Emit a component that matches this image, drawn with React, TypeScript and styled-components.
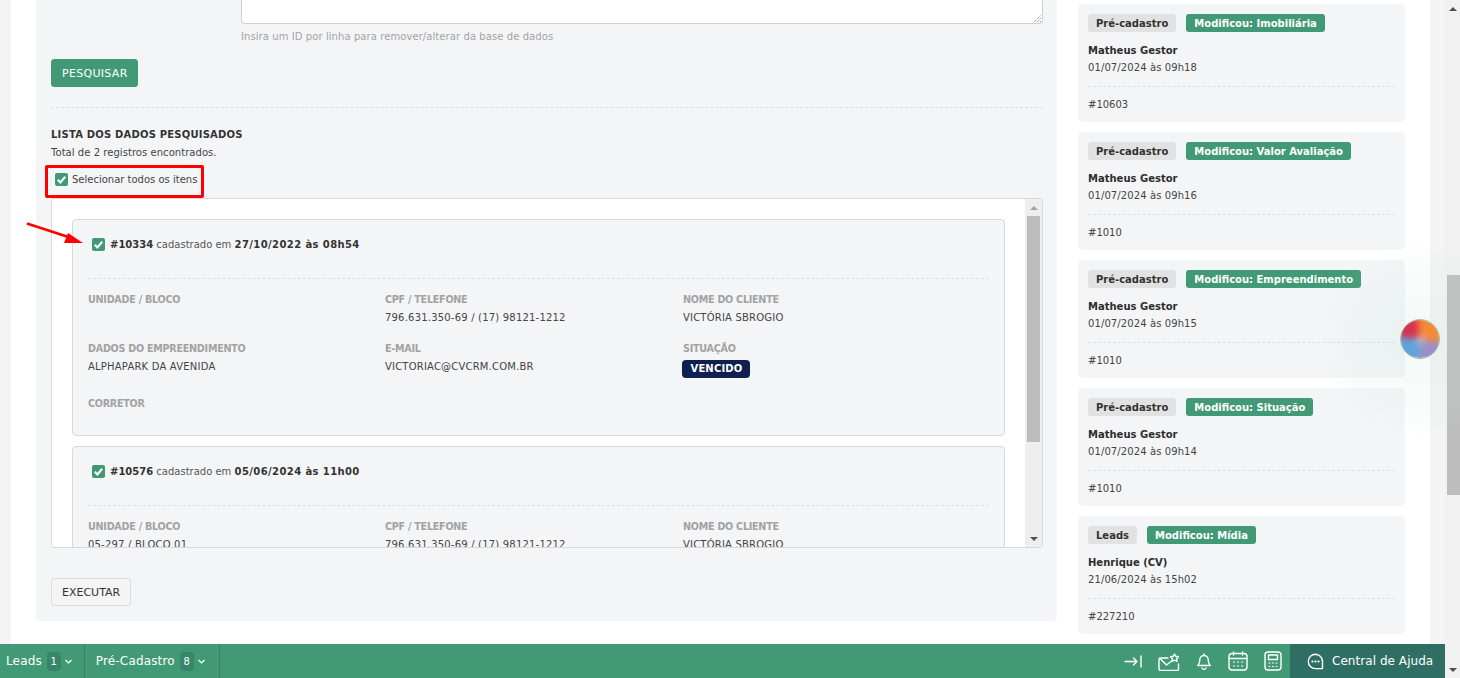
import React from 'react';
import styled, { createGlobalStyle } from 'styled-components';

const green = '#419a75';
const textDark = '#333333';

const GlobalStyle = createGlobalStyle`
  html, body {
    margin: 0;
    padding: 0;
    overflow: hidden;
    background: #f4f4f4;
  }
  body, button, textarea {
    font-family: "DejaVu Sans", Verdana, sans-serif;
  }
  * {
    box-sizing: border-box;
  }
`;

const Page = styled.div`
  position: relative;
  display: flex;
  width: 1460px;
  height: 678px;
  overflow: hidden;
`;

const PageColumn = styled.div`
  display: flex;
  flex-direction: column;
  width: 1445px;
`;

const Workspace = styled.div`
  display: flex;
  align-items: flex-start;
  height: 644px;
  width: 1419px;
  margin-left: 11px;
  padding-left: 25px;
  background: #ffffff;
`;

const MainPanel = styled.main`
  width: 1021px;
  height: 621px;
  padding: 0 14px 0 15px;
  background: #f4f5f7;
  border-radius: 0 0 5px 5px;
`;

const IdField = styled.div`
  margin-left: 190px;
`;

const IdTextarea = styled.div`
  position: relative;
  height: 24px;
  background: #ffffff;
  border: 1px solid #cfcfcf;
  border-top: 0;
  border-radius: 0 0 4px 4px;
`;

const ResizeGrip = styled.svg`
  position: absolute;
  right: 0;
  bottom: 0;
`;

const Hint = styled.div`
  margin-top: 6px;
  font-size: 10px;
  line-height: 13px;
  letter-spacing: 0.08px;
  color: #a3a3a3;
`;

const ActionButton = styled.button<{ $primary?: boolean }>`
  display: block;
  height: 28px;
  padding: 0 ${(p) => (p.$primary ? 9 : 10)}px 0 10px;
  border-radius: 3px;
  border: 1px solid ${(p) => (p.$primary ? green : '#dddddd')};
  background: ${(p) => (p.$primary ? green : '#f4f4f4')};
  color: ${(p) => (p.$primary ? '#ffffff' : textDark)};
  font-size: 11px;
  font-weight: 400;
  letter-spacing: ${(p) => (p.$primary ? '0.3px' : '0')};
`;

const ButtonSlot = styled.div<{ $top: number }>`
  margin-top: ${(p) => p.$top}px;
`;

const Dashed = styled.div<{ $color?: string }>`
  height: 0;
  border-top: 1px dashed ${(p) => p.$color || '#dedfe1'};
`;

const SearchDivider = styled(Dashed)`
  margin-top: 20px;
`;

const ListTitle = styled.h2`
  margin: 20px 0 0;
  font-size: 10px;
  line-height: 13px;
  font-weight: 700;
  letter-spacing: 0.2px;
  color: #333333;
`;

const ListTotal = styled.p`
  margin: 5px 0 0;
  font-size: 10px;
  line-height: 13px;
  letter-spacing: 0.05px;
  color: #444444;
`;

const SelectAll = styled.label`
  display: flex;
  align-items: center;
  gap: 4px;
  height: 13px;
  margin: 14px 0 12px 4px;
  font-size: 10px;
  color: #444444;
`;

const ListBox = styled.div`
  display: flex;
  height: 350px;
  width: 992px;
  background: #ffffff;
  border: 1px solid #d9d9d9;
  border-radius: 3px;
  overflow: hidden;
`;

const ListScroll = styled.div`
  flex: 1;
  display: flex;
  flex-direction: column;
  gap: 10px;
  padding: 20px 20px 0 20px;
  overflow: hidden;
`;

const ListScrollbar = styled.div`
  display: flex;
  flex-direction: column;
  align-items: center;
  width: 17px;
  background: #eeeeee;
  padding: 0 2px;
`;

const Arrow = styled.span<{ $up?: boolean; $dark?: boolean }>`
  width: 0;
  height: 0;
  border-left: 4px solid transparent;
  border-right: 4px solid transparent;
  ${(p) => (p.$up ? 'border-bottom' : 'border-top')}: 4px solid ${(p) => (p.$dark ? '#505050' : '#a3a3a3')};
`;

const ArrowCell = styled.div<{ $height: number }>`
  display: flex;
  align-items: center;
  justify-content: center;
  height: ${(p) => p.$height}px;
  flex-shrink: 0;
`;

const ScrollThumb = styled.div<{ $height: number }>`
  width: 100%;
  height: ${(p) => p.$height}px;
  background: #bdbdbd;
  flex-shrink: 0;
`;

const ScrollRest = styled.div`
  flex: 1;
`;

const RecordCard = styled.article`
  flex-shrink: 0;
  height: 217px;
  padding: 17px 15px 0 15px;
  background: #f4f5f7;
  border: 1px solid #d9d9d9;
  border-radius: 4px;
`;

const RecordHead = styled.div`
  display: flex;
  align-items: center;
  gap: 5px;
  height: 14px;
  margin-left: 4px;
  font-size: 10px;
  color: #555555;
`;

const RecordId = styled.strong`
  font-weight: 700;
  color: #333333;
`;

const RecordDate = styled.strong`
  font-weight: 700;
  letter-spacing: 0.4px;
  color: #333333;
`;

const RecordDivider = styled(Dashed)`
  margin-top: 27px;
`;

const FieldGrid = styled.div`
  display: grid;
  grid-template-columns: 297px 298px 1fr;
  margin-top: 14px;
`;

const Field = styled.div<{ $height: number }>`
  height: ${(p) => p.$height}px;
`;

const FieldLabel = styled.div`
  font-size: 9.6px;
  line-height: 13px;
  font-weight: 700;
  letter-spacing: -0.25px;
  color: #a2a2a2;
`;

const FieldValue = styled.div`
  margin-top: 5px;
  font-size: 10px;
  line-height: 13px;
  letter-spacing: 0.2px;
  color: #444444;
`;

const StatusBadge = styled.span`
  display: block;
  width: fit-content;
  margin: 5px 0 0 -1px;
  padding: 0 8px 0 8.5px;
  height: 18px;
  line-height: 18px;
  border-radius: 4px;
  background: #0f2050;
  color: #ffffff;
  font-size: 10px;
  font-weight: 700;
  letter-spacing: 0.15px;
`;

const SideColumn = styled.aside`
  display: flex;
  flex-direction: column;
  gap: 10px;
  width: 327px;
  margin-left: 21px;
  padding-top: 4px;
`;

const HistoryCard = styled.article`
  height: 118px;
  padding: 10px 10px 0 10px;
  background: #f4f5f7;
  border-radius: 5px;
`;

const BadgeRow = styled.div`
  display: flex;
  gap: 10px;
`;

const Tag = styled.span<{ $green?: boolean }>`
  height: 18px;
  padding: 0 8px;
  line-height: 20px;
  border-radius: 3px;
  font-size: 10px;
  font-weight: 700;
  background: ${(p) => (p.$green ? green : '#e2e2e2')};
  color: ${(p) => (p.$green ? '#ffffff' : '#333333')};
`;

const HistoryName = styled.div`
  margin-top: 12px;
  font-size: 10px;
  line-height: 13px;
  font-weight: 700;
  color: #2e2e2e;
`;

const HistoryDate = styled.div`
  margin-top: 4px;
  font-size: 10px;
  line-height: 13px;
  letter-spacing: 0.1px;
  color: #444444;
`;

const HistoryDivider = styled(Dashed)`
  margin-top: 12px;
`;

const HistoryId = styled.div`
  margin-top: 11px;
  font-size: 10px;
  line-height: 13px;
  color: #444444;
`;

const BottomBar = styled.footer`
  display: flex;
  align-items: stretch;
  height: 34px;
  background: ${green};
  color: #ffffff;
`;

const BarTab = styled.div<{ $first?: boolean }>`
  display: flex;
  align-items: center;
  padding: 0 ${(p) => (p.$first ? 11 : 13)}px 0 ${(p) => (p.$first ? 6 : 11)}px;
  border-right: 1px solid #348160;
  font-size: 12px;
  letter-spacing: 0.15px;
`;

const BarCount = styled.span`
  display: flex;
  align-items: center;
  justify-content: center;
  width: 14px;
  height: 19px;
  margin-left: 5px;
  margin-right: 3px;
  border-radius: 4px;
  background: #368667;
  font-size: 10px;
`;

const BarIcons = styled.div`
  display: flex;
  align-items: center;
  gap: 16px;
  margin-left: auto;
  padding-right: 8px;
`;

const HelpBlock = styled.div`
  display: flex;
  align-items: center;
  gap: 8px;
  width: 155px;
  padding-left: 17px;
  background: #2f6f63;
  font-size: 12px;
  letter-spacing: 0.05px;
`;

const PageScrollbar = styled.div`
  display: flex;
  flex-direction: column;
  align-items: flex-end;
  width: 15px;
  background: #f1f1f1;
`;

const PageArrowCell = styled.div`
  display: flex;
  justify-content: center;
  align-items: center;
  width: 15px;
  height: 17px;
`;

const PageTrack = styled.div`
  flex: 1;
  width: 13px;
  padding-top: 258px;
`;

const PageThumb = styled.div`
  width: 13px;
  height: 220px;
  background: #bdbdbd;
`;

const AnnotationBox = styled.div`
  position: absolute;
  left: 45px;
  top: 165px;
  width: 159px;
  height: 33px;
  border: 3px solid #ff0000;
  border-radius: 2px;
`;

const AnnotationArrow = styled.svg`
  position: absolute;
  left: 24px;
  top: 220px;
`;

const Glow = styled.div`
  position: absolute;
  left: 1320px;
  top: 240px;
  width: 200px;
  height: 200px;
  border-radius: 50%;
  background: radial-gradient(circle, rgba(190, 225, 210, 0.2) 0%, rgba(200, 230, 215, 0.1) 50%, rgba(255, 255, 255, 0) 72%);
  pointer-events: none;
`;

const Orb = styled.div`
  position: absolute;
  left: 1400px;
  top: 319px;
  width: 40px;
  height: 40px;
  border-radius: 50%;
  border: 1px solid #9dc3a8;
  overflow: hidden;

  &::before {
    content: '';
    position: absolute;
    inset: -4px;
    filter: blur(3px);
    background:
      radial-gradient(circle at 50% 52%, rgba(215, 220, 225, 0.7) 0, rgba(215, 220, 225, 0) 22%),
      conic-gradient(#f58a35 0deg 95deg, #9a8fc9 105deg 175deg, #5fa3dc 195deg 265deg, #d8304f 285deg 345deg, #f58a35 360deg);
  }
`;

const CheckBox = styled.svg`
  flex-shrink: 0;
`;

const CheckIcon = () => (
  <CheckBox width="13" height="13" viewBox="0 0 13 13">
    <rect width="13" height="13" rx="2" fill={green} />
    <path d="M2.800 6.800l2.600 2.600 4.800-5.600" fill="none" stroke="#ffffff" strokeWidth="2.100" />
  </CheckBox>
);

const Chevron = () => (
  <svg width="9" height="9" viewBox="0 0 9 9">
    <path d="M1.500 3l3 3 3-3" fill="none" stroke="#ffffff" strokeWidth="1.200" />
  </svg>
);

const iconProps = {
  fill: 'none',
  stroke: '#ffffff',
  strokeWidth: 1.4,
  strokeLinecap: 'round' as const,
  strokeLinejoin: 'round' as const,
};

const ArrowLineIcon = () => (
  <svg width="18" height="20" viewBox="0 0 18 20" {...iconProps}>
    <path d="M1 10.500h12M9.500 7l3.500 3.500-3.500 3.500M17 5v11" />
  </svg>
);

const MailStarIcon = () => (
  <svg width="22" height="20" viewBox="0 0 22 20" {...iconProps}>
    <path d="M10 7H2.500A1.500 1.500 0 0 0 1 8.500V18A1.500 1.500 0 0 0 2.500 19.500H19A1.500 1.500 0 0 0 20.500 18V13" />
    <path d="M2 7.500l6.500 6.500L13 10.500" />
    <path d="M16.500 3l1.300 2.300 2.600.5-1.800 1.900.4 2.600-2.500-1.100-2.500 1.100.4-2.600-1.800-1.900 2.600-.5z" />
  </svg>
);

const BellIcon = () => (
  <svg width="16" height="20" viewBox="0 0 16 20" {...iconProps}>
    <path d="M8 4.500a4.200 4.200 0 0 1 4.200 4.200c0 3 .7 4.300 2 5.800H1.800c1.300-1.500 2-2.800 2-5.800A4.200 4.200 0 0 1 8 4.500z" />
    <path d="M6 17a2.200 2.200 0 0 0 4 0M8 3v1.500" />
  </svg>
);

const CalendarIcon = () => (
  <svg width="20" height="20" viewBox="0 0 20 20" {...iconProps}>
    <rect x="1" y="2.500" width="18" height="16.500" rx="3" />
    <path d="M1 7.500h18M5.500 1v3M14.500 1v3" />
    <path d="M5.500 11h1.200M9.500 11h1.200M13.500 11h1.200M5.500 15h1.200M9.500 15h1.200M13.500 15h1.200" strokeWidth="1.200" />
  </svg>
);

const CalculatorIcon = () => (
  <svg width="18" height="20" viewBox="0 0 18 20" {...iconProps}>
    <rect x="1" y="1" width="16" height="18" rx="3" />
    <rect x="4.500" y="4" width="9" height="4.500" />
    <path d="M5 12h1M8.500 12h1M12 12h1M5 15.500h1M8.500 15.500h1M12 15.500h1" strokeWidth="1.200" />
  </svg>
);

const ChatIcon = () => (
  <svg width="17" height="17" viewBox="0 0 17 17" {...iconProps}>
    <path d="M8.500 1.200a7.200 7.200 0 1 0 0 14.400H15.500V8.500A7.200 7.200 0 0 0 8.500 1.200z" />
    <path d="M5.300 8.500h.4M8.300 8.500h.4M11.300 8.500h.4" strokeWidth="1.800" />
  </svg>
);

type RecordData = {
  id: string;
  createdAt: string;
  unit: string;
};

const records: RecordData[] = [
  { id: '#10334', createdAt: '27/10/2022 às 08h54', unit: '' },
  { id: '#10576', createdAt: '05/06/2024 às 11h00', unit: '05-297 / BLOCO 01' },
];

const history = [
  { kind: 'Pré-cadastro', change: 'Modificou: Imobiliária', name: 'Matheus Gestor', date: '01/07/2024 às 09h18', id: '#10603' },
  { kind: 'Pré-cadastro', change: 'Modificou: Valor Avaliação', name: 'Matheus Gestor', date: '01/07/2024 às 09h16', id: '#1010' },
  { kind: 'Pré-cadastro', change: 'Modificou: Empreendimento', name: 'Matheus Gestor', date: '01/07/2024 às 09h15', id: '#1010' },
  { kind: 'Pré-cadastro', change: 'Modificou: Situação', name: 'Matheus Gestor', date: '01/07/2024 às 09h14', id: '#1010' },
  { kind: 'Leads', change: 'Modificou: Mídia', name: 'Henrique (CV)', date: '21/06/2024 às 15h02', id: '#227210' },
];

const RecordItem = ({ record }: { record: RecordData }) => (
  <RecordCard>
    <RecordHead>
      <CheckIcon />
      <span>
        <RecordId>{record.id}</RecordId> cadastrado em <RecordDate>{record.createdAt}</RecordDate>
      </span>
    </RecordHead>
    <RecordDivider />
    <FieldGrid>
      <Field $height={49}>
        <FieldLabel>UNIDADE / BLOCO</FieldLabel>
        <FieldValue>{record.unit}</FieldValue>
      </Field>
      <Field $height={49}>
        <FieldLabel>CPF / TELEFONE</FieldLabel>
        <FieldValue>796.631.350-69 / (17) 98121-1212</FieldValue>
      </Field>
      <Field $height={49}>
        <FieldLabel>NOME DO CLIENTE</FieldLabel>
        <FieldValue>VICTÓRIA SBROGIO</FieldValue>
      </Field>
      <Field $height={55}>
        <FieldLabel>DADOS DO EMPREENDIMENTO</FieldLabel>
        <FieldValue>ALPHAPARK DA AVENIDA</FieldValue>
      </Field>
      <Field $height={55}>
        <FieldLabel>E-MAIL</FieldLabel>
        <FieldValue>VICTORIAC@CVCRM.COM.BR</FieldValue>
      </Field>
      <Field $height={55}>
        <FieldLabel>SITUAÇÃO</FieldLabel>
        <StatusBadge>VENCIDO</StatusBadge>
      </Field>
      <Field $height={30}>
        <FieldLabel>CORRETOR</FieldLabel>
      </Field>
    </FieldGrid>
  </RecordCard>
);

export default function App() {
  return (
    <Page>
      <GlobalStyle />
      <PageColumn>
        <Workspace>
          <MainPanel>
            <IdField>
              <IdTextarea>
                <ResizeGrip width="9" height="9" viewBox="0 0 9 9">
                  <path d="M1 8l7-7M4 8l4-4M7 8l1-1" stroke="#777777" strokeWidth="1" strokeDasharray="1 1" />
                </ResizeGrip>
              </IdTextarea>
              <Hint>Insira um ID por linha para remover/alterar da base de dados</Hint>
            </IdField>
            <ButtonSlot $top={16}>
              <ActionButton $primary>PESQUISAR</ActionButton>
            </ButtonSlot>
            <SearchDivider />
            <ListTitle>LISTA DOS DADOS PESQUISADOS</ListTitle>
            <ListTotal>Total de 2 registros encontrados.</ListTotal>
            <SelectAll>
              <CheckIcon />
              Selecionar todos os itens
            </SelectAll>
            <ListBox>
              <ListScroll>
                {records.map((r) => (
                  <RecordItem key={r.id} record={r} />
                ))}
              </ListScroll>
              <ListScrollbar>
                <ArrowCell $height={17}>
                  <Arrow $up />
                </ArrowCell>
                <ScrollThumb $height={226} />
                <ScrollRest />
                <ArrowCell $height={17}>
                  <Arrow $dark />
                </ArrowCell>
              </ListScrollbar>
            </ListBox>
            <ButtonSlot $top={30}>
              <ActionButton>EXECUTAR</ActionButton>
            </ButtonSlot>
          </MainPanel>
          <SideColumn>
            {history.map((h) => (
              <HistoryCard key={h.date}>
                <BadgeRow>
                  <Tag>{h.kind}</Tag>
                  <Tag $green>{h.change}</Tag>
                </BadgeRow>
                <HistoryName>{h.name}</HistoryName>
                <HistoryDate>{h.date}</HistoryDate>
                <HistoryDivider />
                <HistoryId>{h.id}</HistoryId>
              </HistoryCard>
            ))}
          </SideColumn>
        </Workspace>
        <BottomBar>
          <BarTab $first>
            Leads
            <BarCount>1</BarCount>
            <Chevron />
          </BarTab>
          <BarTab>
            Pré-Cadastro
            <BarCount>8</BarCount>
            <Chevron />
          </BarTab>
          <BarIcons>
            <ArrowLineIcon />
            <MailStarIcon />
            <BellIcon />
            <CalendarIcon />
            <CalculatorIcon />
          </BarIcons>
          <HelpBlock>
            <ChatIcon />
            Central de Ajuda
          </HelpBlock>
        </BottomBar>
      </PageColumn>
      <PageScrollbar>
        <PageArrowCell>
          <Arrow $up $dark />
        </PageArrowCell>
        <PageTrack>
          <PageThumb />
        </PageTrack>
        <PageArrowCell>
          <Arrow $dark />
        </PageArrowCell>
      </PageScrollbar>
      <Glow />
      <Orb />
      <AnnotationBox />
      <AnnotationArrow width="64" height="28" viewBox="0 0 64 28">
        <path d="M3 3.500l46 15" stroke="#ff0000" strokeWidth="2.600" />
        <path d="M59 23l-19 0 4-10z" fill="#ff0000" />
      </AnnotationArrow>
    </Page>
  );
}
